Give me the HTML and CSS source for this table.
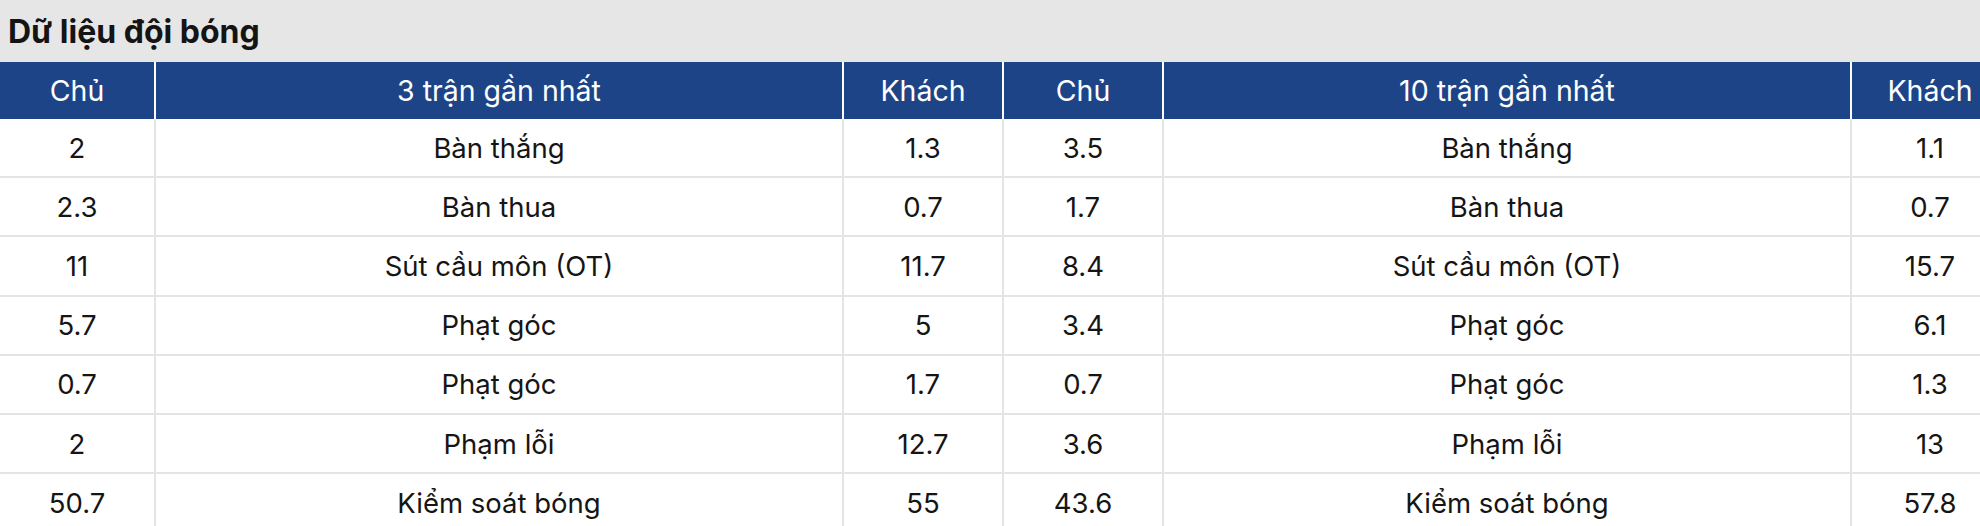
FILE: index.html
```html
<!DOCTYPE html>
<html lang="vi">
<head>
<meta charset="utf-8">
<link rel="stylesheet" href="styles.css">
</head>
<body>
<div class="panel">
  <div class="title">Dữ liệu đội bóng</div>
  <table class="stats">
    <colgroup>
      <col class="c-num1"><col class="c-label"><col class="c-num"><col class="c-num"><col class="c-label"><col class="c-num1">
    </colgroup>
    <thead>
      <tr><th>Chủ</th><th>3 trận gần nhất</th><th>Khách</th><th>Chủ</th><th>10 trận gần nhất</th><th class="last">Khách</th></tr>
    </thead>
    <tbody>
      <tr><td>2</td><td>Bàn thắng</td><td>1.3</td><td>3.5</td><td>Bàn thắng</td><td class="last">1.1</td></tr>
      <tr><td>2.3</td><td>Bàn thua</td><td>0.7</td><td>1.7</td><td>Bàn thua</td><td class="last">0.7</td></tr>
      <tr><td>11</td><td>Sút cầu môn (OT)</td><td>11.7</td><td>8.4</td><td>Sút cầu môn (OT)</td><td class="last">15.7</td></tr>
      <tr><td>5.7</td><td>Phạt góc</td><td>5</td><td>3.4</td><td>Phạt góc</td><td class="last">6.1</td></tr>
      <tr><td>0.7</td><td>Phạt góc</td><td>1.7</td><td>0.7</td><td>Phạt góc</td><td class="last">1.3</td></tr>
      <tr><td>2</td><td>Phạm lỗi</td><td>12.7</td><td>3.6</td><td>Phạm lỗi</td><td class="last">13</td></tr>
      <tr><td>50.7</td><td>Kiểm soát bóng</td><td>55</td><td>43.6</td><td>Kiểm soát bóng</td><td class="last">57.8</td></tr>
    </tbody>
  </table>
</div>
</body>
</html>
```
FILE: styles.css
```css
html, body {
  margin: 0;
  padding: 0;
  background: #ffffff;
  overflow: hidden;
}
.panel {
  font-family: Inter, "Noto Sans", sans-serif;
  color: #111111;
}
.title {
  height: 62px;
  background: #e6e6e6;
  padding-left: 8px;
  padding-top: 1px;
  box-sizing: border-box;
  display: flex;
  align-items: center;
  font-size: 32px;
  font-weight: 700;
  color: #141414;
}
.stats {
  border-collapse: separate;
  border-spacing: 0;
  table-layout: fixed;
  width: 2006px;
}
.c-num1 { width: 156px; }
.c-label { width: 688px; }
.c-num { width: 160px; }
.stats th {
  height: 57px;
  padding: 0;
  background: #1e4488;
  color: #ffffff;
  font-weight: 400;
  font-size: 28.5px;
  text-align: center;
  border-right: 2px solid #ffffff;
}
.stats td {
  height: 57.2px;
  padding: 0;
  font-size: 27.5px;
  text-align: center;
  border-right: 2px solid #e4e4e4;
  border-bottom: 2px solid #e4e4e4;
  color: #151515;
}
.stats .last { border-right: none; }
```
